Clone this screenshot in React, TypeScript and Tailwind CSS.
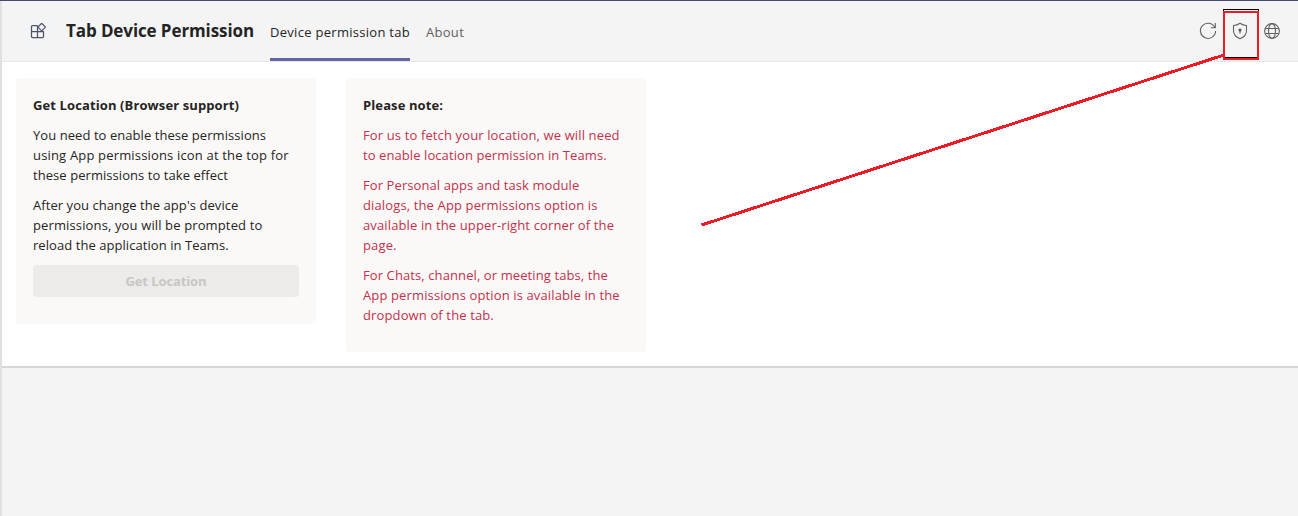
import React from "react";

type CardProps = { title: string; height: string; children: React.ReactNode };

function Card({ title, height, children }: CardProps) {
  return (
    <section className={`flex w-[300px] flex-col rounded bg-[#faf9f8] px-[17px] pt-[17px] ${height}`}>
      <h2 className="mb-[10px] text-[13px] leading-5 font-bold tracking-[0.11px] text-[#252423]">{title}</h2>
      {children}
    </section>
  );
}

type Line = { text: string; tracking: string };

const SNUG = "tracking-[0.06px]";
const WIDE = "tracking-[0.13px]";

function Lines({ lines }: { lines: Line[] }) {
  return (
    <p className="mb-[10px] text-[13px] leading-5 whitespace-nowrap">
      {lines.map((line) => (
        <span key={line.text} className={`block ${line.tracking}`}>{line.text}</span>
      ))}
    </p>
  );
}

function AppIcon() {
  return (
    <svg width="16" height="16" viewBox="0 0 16 16" fill="none" stroke="#4f5366" strokeWidth="1.25" strokeLinejoin="round">
      <path d="M7.500 2.500H2.500a1 1 0 0 0-1 1v10a1 1 0 0 0 1 1h10a1 1 0 0 0 1-1V8.500H1.500M7.500 2.500v12" />
      <path d="M11.200 .8q.5-.5 1 0l2.800 2.800q.5.5 0 1l-2.800 2.800q-.5.5-1 0l-2.800-2.800q-.5-.5 0-1Z" fill="#f3f4f8" />
    </svg>
  );
}

function ReloadIcon() {
  return (
    <svg width="18" height="18" viewBox="0 0 18 18" fill="none" stroke="#616161" strokeWidth="1.1">
      <path d="M15.8 5.4A7.6 7.6 0 1 0 16.6 9M16.3 1v4.7h-4.6" />
    </svg>
  );
}

function ShieldIcon() {
  return (
    <svg width="16" height="18" viewBox="0 0 16 18" fill="none" stroke="#616161" strokeWidth="1.1" strokeLinejoin="round">
      <path d="M8 1.2c2 1.5 4 2.2 6.500 2.300v5.200c0 3.800-2.300 6.300-6.500 8-4.200-1.700-6.500-4.200-6.500-8V3.500C4 3.400 6 2.700 8 1.200Z" />
      <circle cx="8" cy="8" r="1" fill="#555" stroke="#555" />
      <path d="M8 8v3.500" stroke="#555" strokeWidth="1.100" />
    </svg>
  );
}

function GlobeIcon() {
  return (
    <svg width="16" height="16" viewBox="0 0 16 16" fill="none" stroke="#616161" strokeWidth="1.1">
      <circle cx="8" cy="8" r="7.400" />
      <ellipse cx="8" cy="8" rx="3.500" ry="7.400" />
      <path d="M1.200 5.500h13.600M1.200 10.500h13.600" />
    </svg>
  );
}

export default function App() {
  return (
    <div className="relative h-[516px] w-[1298px] overflow-hidden border-t border-t-[#464775] bg-[#f4f4f4] font-['Open_Sans',sans-serif]">
      <div className="h-full border-l-2 border-l-[#e0e0e0]">
        <header className="flex h-[61px] border-b border-[#e6e6e6] bg-[#f4f4f4]">
          <div className="mt-[14px] ml-5 flex h-8 w-8 items-center justify-center rounded bg-[#f3f4f6]">
            <AppIcon />
          </div>
          <h1 className="ml-3 w-[204px] pt-[18px] text-[17px] leading-6 font-bold tracking-[-0.1px] whitespace-nowrap text-[#242424]">Tab Device Permission</h1>
          <nav className="flex gap-4 text-[13px] leading-5 tracking-[0.29px] whitespace-nowrap">
            <a className="h-[60px] w-[140px] border-b-[3px] border-[#6264a7] pt-[21px] text-[#242424]">Device permission tab</a>
            <a className="pt-[21px] text-[#616161]">About</a>
          </nav>
          <div className="mt-[21px] mr-[18px] ml-auto flex h-[18px] items-center">
            <ReloadIcon />
            <span className="ml-[15px]"><ShieldIcon /></span>
            <span className="ml-4"><GlobeIcon /></span>
          </div>
        </header>
        <main className="flex h-[306px] items-start gap-[30px] border-b-2 border-[#d6d6d6] bg-white pt-4 pl-[14px]">
          <Card title="Get Location (Browser support)" height="h-[246px]">
            <div className="text-[#252423]">
              <Lines
                lines={[
                  { text: "You need to enable these permissions", tracking: SNUG },
                  { text: "using App permissions icon at the top for", tracking: "tracking-[0.17px]" },
                  { text: "these permissions to take effect", tracking: SNUG },
                ]}
              />
              <Lines
                lines={[
                  { text: "After you change the app's device", tracking: SNUG },
                  { text: "permissions, you will be prompted to", tracking: WIDE },
                  { text: "reload the application in Teams.", tracking: SNUG },
                ]}
              />
            </div>
            <button disabled className="h-8 w-full rounded bg-[#edebe9] pt-0.5 text-[13px] font-bold tracking-[-0.1px] text-[#c8c6c4]">Get Location</button>
          </Card>
          <Card title="Please note:" height="h-[274px]">
            <div className="text-[#c4314b]">
              <Lines
                lines={[
                  { text: "For us to fetch your location, we will need", tracking: WIDE },
                  { text: "to enable location permission in Teams.", tracking: "tracking-[0.08px]" },
                ]}
              />
              <Lines
                lines={[
                  { text: "For Personal apps and task module", tracking: "tracking-[0.09px]" },
                  { text: "dialogs, the App permissions option is", tracking: WIDE },
                  { text: "available in the upper-right corner of the", tracking: WIDE },
                  { text: "page.", tracking: WIDE },
                ]}
              />
              <Lines
                lines={[
                  { text: "For Chats, channel, or meeting tabs, the", tracking: "tracking-[0.1px]" },
                  { text: "App permissions option is available in the", tracking: WIDE },
                  { text: "dropdown of the tab.", tracking: WIDE },
                ]}
              />
            </div>
          </Card>
        </main>
      </div>
      <svg className="absolute -top-px left-0" width="1298" height="516" viewBox="0 0 1298 516" fill="none" shapeRendering="crispEdges">
        <rect x="1224" y="12" width="34" height="47" stroke="#ed1c24" strokeWidth="2" />
        <path d="M1223.500 11V9.500H1258.500V11M1225 57.500H1257" stroke="#000" />
        <path d="M701.500 225 1224 55" stroke="#ed1c24" strokeWidth="3" />
      </svg>
    </div>
  );
}
